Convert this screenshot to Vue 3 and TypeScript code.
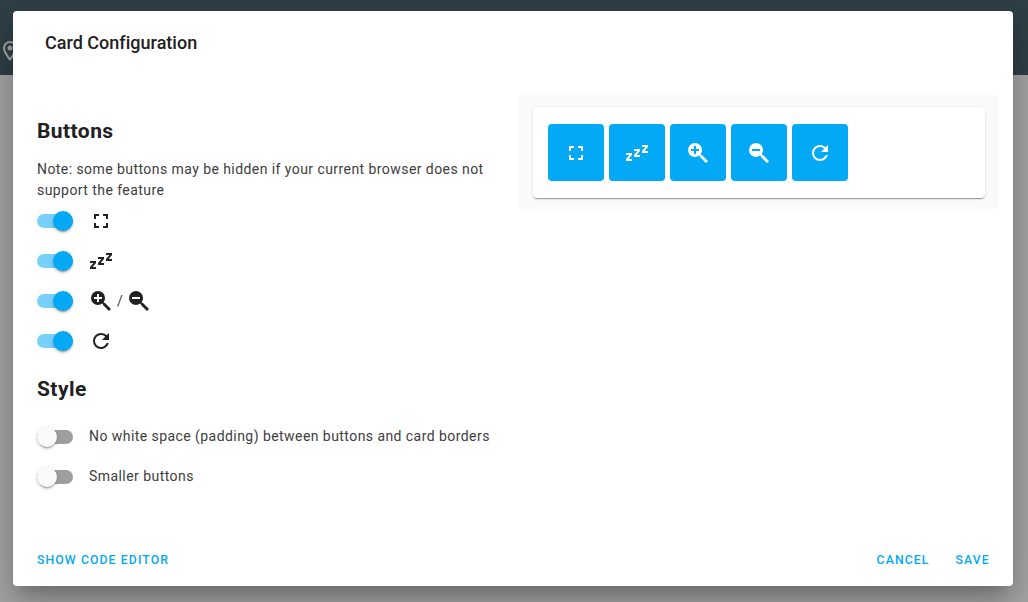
<script setup lang="ts">
import { ref } from 'vue'

const lens = 'M9,2A7,7 0 0,1 16,9C16,10.57 15.5,12 14.61,13.19L15.41,14H16L22,20L20,22L14,16V15.41L13.19,14.61C12,15.5 10.57,16 9,16A7,7 0 0,1 2,9A7,7 0 0,1 9,2'
const icons = {
  fullscreen: 'M5,5H10V7H7V10H5V5M14,5H19V10H17V7H14V5M17,14H19V19H14V17H17V14M10,17V19H5V14H7V17H10Z',
  sleep: 'M23,12H17V10L20.39,6H17V4H23V6L19.62,10H23V12M15,16H9V14L12.39,10H9V8H15V10L11.62,14H15V16M7,20H1V18L4.39,14H1V12H7V14L3.62,18H7V20Z',
  zoomIn: lens + 'M8,5V8H5V10H8V13H10V10H13V8H10V5H8Z',
  zoomOut: lens + 'M5,8V10H13V8H5Z',
  refresh: 'M17.65,6.35C16.2,4.9 14.21,4 12,4A8,8 0 0,0 4,12A8,8 0 0,0 12,20C15.73,20 18.84,17.45 19.73,14H17.65C16.83,16.33 14.61,18 12,18A6,6 0 0,1 6,12A6,6 0 0,1 12,6C13.66,6 15.14,6.69 16.22,7.78L13,11H20V4L17.65,6.35Z',
}
type Option = { on: boolean; icons: string[] }
const buttons = ref<Option[]>([
  { on: true, icons: [icons.fullscreen] },
  { on: true, icons: [icons.sleep] },
  { on: true, icons: [icons.zoomIn, icons.zoomOut] },
  { on: true, icons: [icons.refresh] },
])
const styles = ref([
  { on: false, label: 'No white space (padding) between buttons and card borders' },
  { on: false, label: 'Smaller buttons' },
])
</script>

<template>
  <div class="page">
    <div class="toolbar">
      <svg class="pin" viewBox="0 0 24 24"><path d="M12,6.5A2.5,2.5 0 0,1 14.5,9A2.5,2.5 0 0,1 12,11.5A2.5,2.5 0 0,1 9.5,9A2.5,2.5 0 0,1 12,6.5M12,2A7,7 0 0,1 19,9C19,14.25 12,22 12,22C12,22 5,14.25 5,9A7,7 0 0,1 12,2M12,4A5,5 0 0,0 7,9C7,10 7,12 12,18.71C17,12 17,10 17,9A5,5 0 0,0 12,4Z" /></svg>
    </div>
    <div class="dialog" role="dialog">
      <h1>Card Configuration</h1>
      <div class="content">
        <section class="editor">
          <h2>Buttons</h2>
          <p>Note: some buttons may be hidden if your current browser does not support the feature</p>
          <div v-for="(b, i) in buttons" :key="i" class="row">
            <button class="switch" :class="{ on: b.on }" @click="b.on = !b.on"><span class="thumb" /></button>
            <template v-for="(d, k) in b.icons" :key="k">
              <span v-if="k" class="slash">/</span>
              <svg class="icon" viewBox="0 0 24 24"><path :d="d" /></svg>
            </template>
          </div>
          <h2 class="second">Style</h2>
          <div v-for="s in styles" :key="s.label" class="row">
            <button class="switch" :class="{ on: s.on }" @click="s.on = !s.on"><span class="thumb" /></button>
            <span class="label">{{ s.label }}</span>
          </div>
        </section>
        <section class="preview">
          <div class="card">
            <template v-for="(b, i) in buttons" :key="i">
              <div v-for="d in b.icons" v-show="b.on" :key="d" class="tile">
                <svg class="icon" viewBox="0 0 24 24"><path :d="d" /></svg>
              </div>
            </template>
          </div>
        </section>
      </div>
      <footer>
        <button class="action">Show code editor</button>
        <span class="spacer" />
        <button class="action cancel">Cancel</button>
        <button class="action">Save</button>
      </footer>
    </div>
  </div>
</template>

<style>
body { margin: 0; overflow: hidden; }
</style>
<style scoped>
* { box-sizing: border-box; }
.page {
  position: relative;
  height: 602px;
  background: #a8a8a8;
  font-family: Roboto, "Liberation Sans", sans-serif;
  color: #212121;
}
.toolbar { height: 75px; background: #304048; }
.pin { position: absolute; left: -2px; top: 39px; width: 24px; height: 24px; fill: #a7a7a7; }
.dialog {
  position: absolute;
  left: 13px;
  top: 11px;
  width: 1000px;
  height: 575px;
  display: flex;
  flex-direction: column;
  border-radius: 4px;
  background: #fff;
  box-shadow: 0 11px 15px -7px rgba(0,0,0,.2), 0 24px 38px 3px rgba(0,0,0,.14), 0 9px 46px 8px rgba(0,0,0,.12);
}
h1 { margin: 0; padding: 20px 32px 0; height: 84px; font-size: 18px; line-height: 24px; font-weight: 500; letter-spacing: .015px; }
.content { flex: 1; display: flex; }
.editor { width: 482px; margin-left: 24px; padding-top: 23px; }
h2 { margin: 0; font-size: 21px; line-height: 26px; font-weight: 700; letter-spacing: .44px; }
p { margin: 15px 0 0; font-size: 14px; line-height: 21px; letter-spacing: .435px; color: #3d3d3d; }
.row { display: flex; align-items: center; height: 40px; }
.switch {
  position: relative;
  width: 36px;
  height: 14px;
  flex: none;
  margin-right: 16px;
  padding: 0;
  border: 0;
  border-radius: 7px;
  background: #9e9e9e;
}
.switch.on { background: #79d0fb; }
.thumb {
  position: absolute;
  left: 0;
  top: -3px;
  width: 20px;
  height: 20px;
  border-radius: 50%;
  background: #fafafa;
  box-shadow: 0 3px 1px -2px rgba(0,0,0,.2), 0 2px 2px 0 rgba(0,0,0,.14), 0 1px 5px 0 rgba(0,0,0,.12);
}
.on .thumb { left: 16px; background: #03a9f4; }
.icon { display: block; width: 24px; height: 24px; fill: currentColor; }
.slash { width: 14px; text-align: center; font-size: 14px; color: #3d3d3d; }
.second { margin: 15px 0 15px; }
.label { padding-bottom: 2px; font-size: 14px; line-height: 20px; letter-spacing: .44px; color: #3d3d3d; }
.preview {
  align-self: flex-start;
  width: 480px;
  height: 114px;
  padding: 12px 14px;
  border-radius: 4px;
  background: #fafafa;
}
.card {
  display: flex;
  gap: 5px;
  height: 91px;
  padding: 17px 15px;
  border-radius: 4px;
  background: #fff;
  box-shadow: 0 2px 1px -1px rgba(0,0,0,.2), 0 1px 1px 0 rgba(0,0,0,.14), 0 1px 3px 0 rgba(0,0,0,.12);
}
.tile { display: flex; align-items: center; justify-content: center; width: 56px; height: 57px; border-radius: 4px; background: #03a9f4; color: #fff; }
footer { display: flex; align-items: center; height: 52px; padding: 0 23.2px 0 24px; }
.action {
  padding: 0;
  border: 0;
  background: none;
  color: #03a9f4;
  font: 500 12.25px/20px Roboto, "Liberation Sans", sans-serif;
  letter-spacing: 1.1px;
  text-transform: uppercase;
}
.spacer { flex: 1; }
.cancel { margin-right: 26px; }
</style>
